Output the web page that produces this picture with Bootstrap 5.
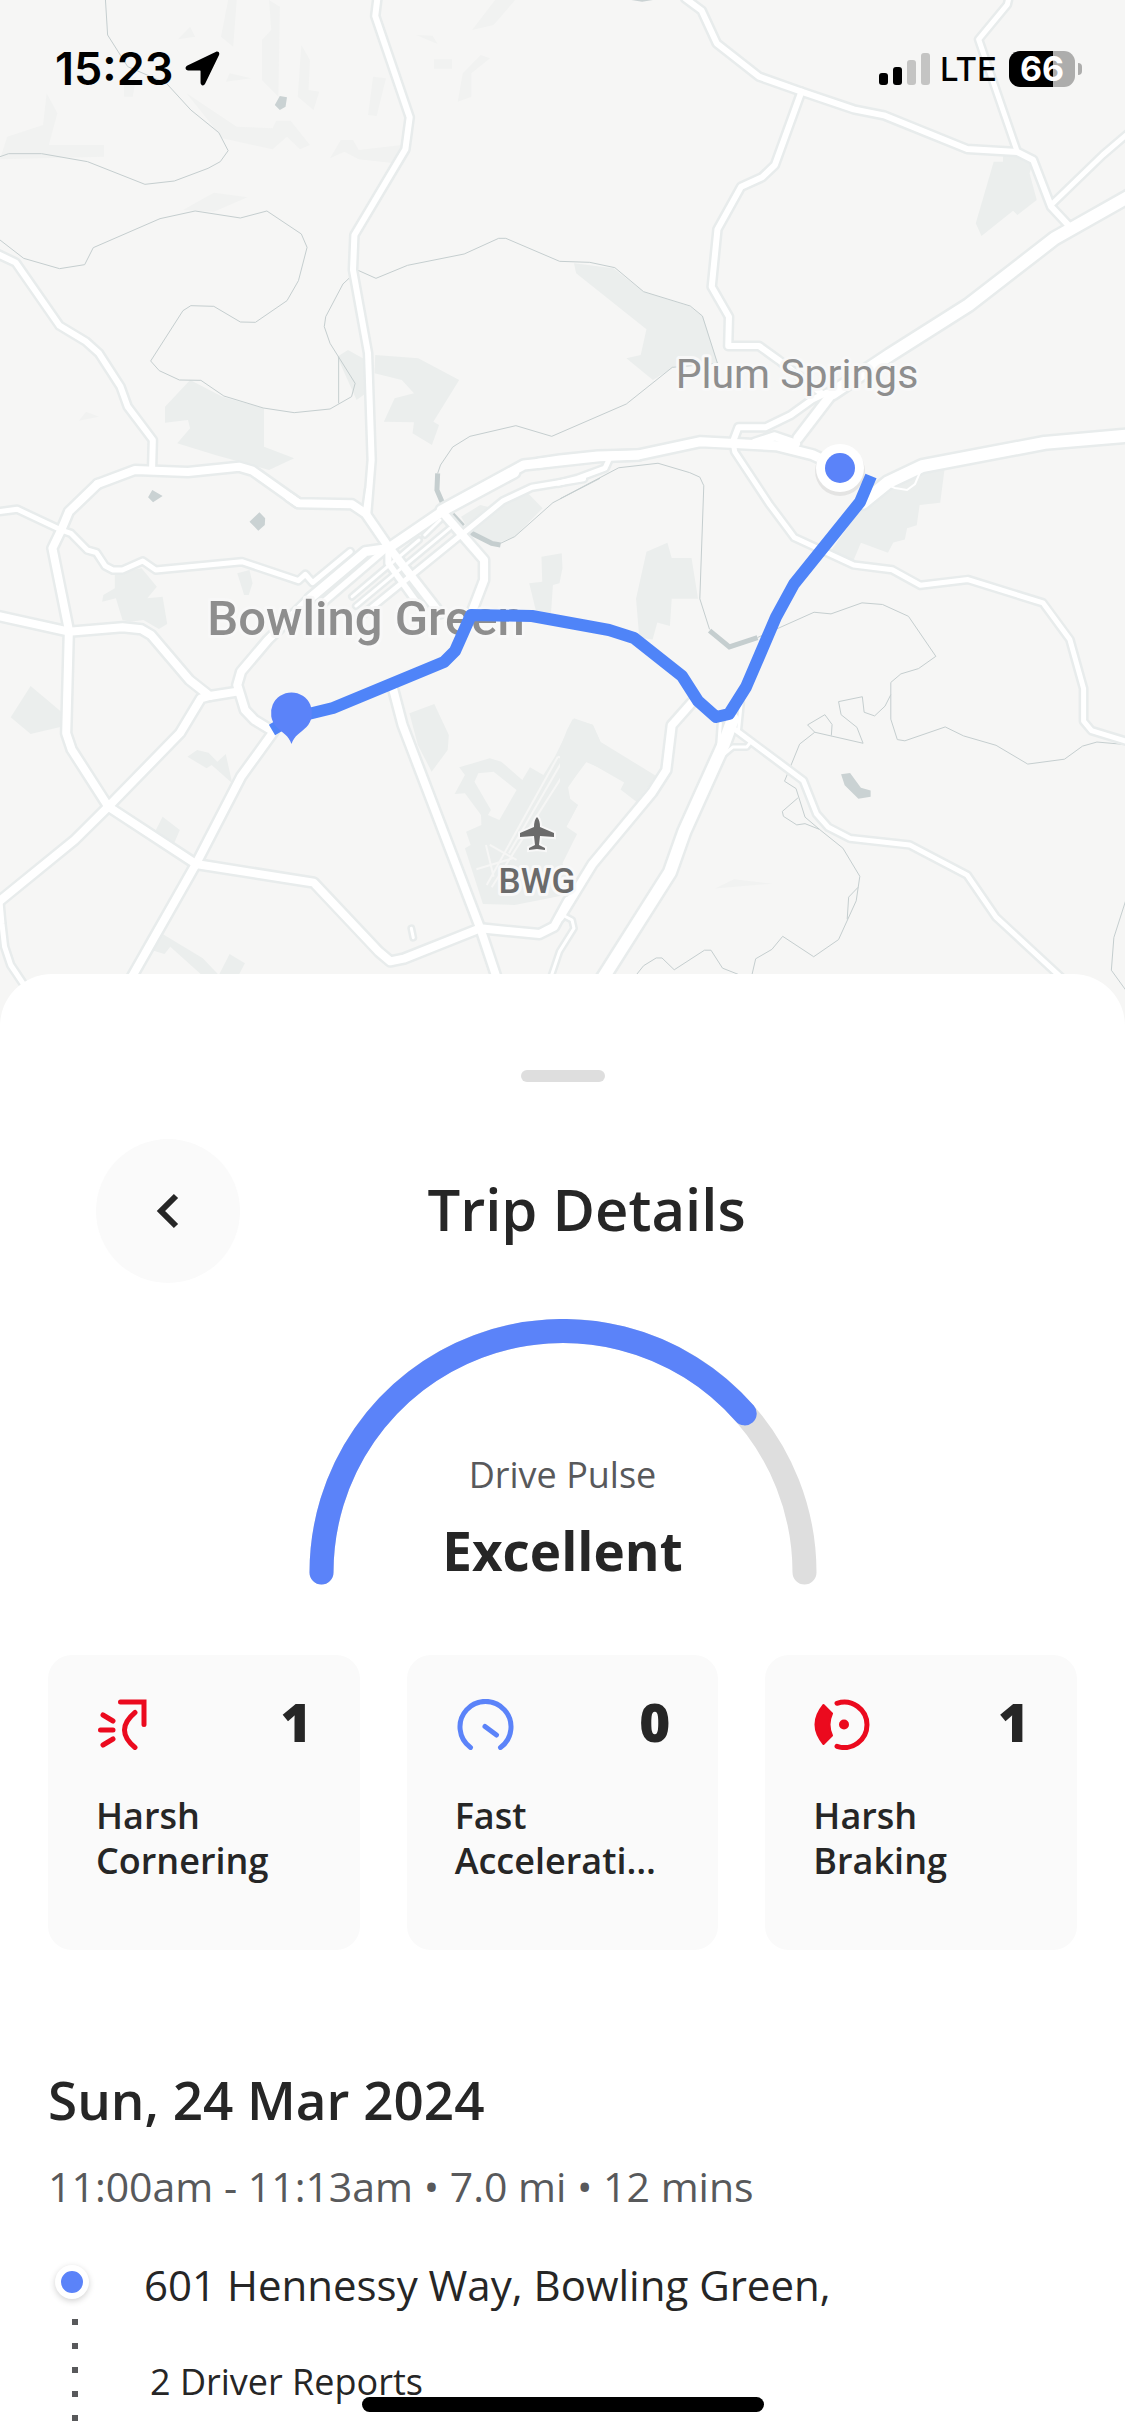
<!DOCTYPE html>
<html lang="en">
<head>
<meta charset="utf-8">
<meta name="viewport" content="width=device-width, initial-scale=1">
<title>Trip Details</title>
<link href="https://cdn.jsdelivr.net/npm/bootstrap@5.3.0/dist/css/bootstrap.min.css" rel="stylesheet">
<style>
:root{--accent:#5b83f9;--ink:#262626;--soft:#58595b;--line:#dedede;--panel:#fafafa;--alert:#eb0a1e}
body{font-family:"Open Sans","Noto Sans",sans-serif;color:var(--ink);background:#fff;overflow-x:hidden}
.map-area{height:1026px;background:#f6f6f5}
.map-area>svg{width:100%;height:100%;display:block}
/* map layers */
.roads path{fill:none;stroke-linejoin:round;stroke-linecap:round;vector-effect:non-scaling-stroke;stroke-width:calc(var(--w) + var(--edge))}
.w3{--w:3px}.w5{--w:5px}.w6{--w:6px}.w8{--w:8px}.w10{--w:9px}.w12{--w:12px}
.casing{stroke:#e8ecec;--edge:5px}
.surface{stroke:#fff;--edge:0px}
.land{fill:#ebeeed}.land-faint{fill:#f1f2f1}.water{fill:#cad2d3}
.streams path{fill:none;stroke:#c5cecf;stroke-width:1px;vector-effect:non-scaling-stroke}
.streams .wide{stroke-width:5px}
.runway path{fill:none;stroke:#f6f6f5;stroke-width:2px;vector-effect:non-scaling-stroke}
.route{fill:none;stroke:#4f84f8;stroke-width:12px;stroke-linejoin:round}
.place{font-family:Roboto,sans-serif;text-anchor:middle;paint-order:stroke;stroke:#f8f8f8;stroke-width:6px;stroke-linejoin:round;fill:#8e8e8e}
.place-town{font-size:41px}
.place-city{font-size:49px;font-weight:500}
.place-air{font-size:35px;font-weight:500;fill:#6b6b6b}
/* status bar */
.status{padding:50px 43px 0 55px;font-family:Inter,sans-serif;color:#000}
.status-row{height:37px}
.clock{font-size:45px;font-weight:600;line-height:36px}
.net{font-size:33px;font-weight:500;line-height:36px;margin:0 12px 0 9px}
.battery{width:66px;height:36px;border-radius:11px;background:linear-gradient(90deg,#000 66%,#adadac 66%);color:#fff;font-size:34px;font-weight:700;line-height:36px}
.battery-tip{width:4px;height:12px;border-radius:0 6px 6px 0;background:#adadac;margin-left:3px}
/* sheet */
.sheet{margin-top:-52px;padding:96px 48px 0;border-radius:52px 52px 0 0;background:#fff}
.grip{width:84px;height:12px;border-radius:6px;background:var(--line)}
.sheet-head{margin-top:57px;padding:0 48px}
.back-btn{width:144px;height:144px;background:var(--panel);border:0}
.sheet-title{font-size:58px;line-height:68px;padding-bottom:4px;font-weight:600;margin-right:96px}
.gauge{width:508px;margin-top:36px}
.gauge-label{font-size:36px;line-height:52px;color:var(--soft);margin-bottom:16px}
.gauge-value{font-size:53px;line-height:68px;font-weight:700}
.stats{gap:47px;margin-top:70px}
.stat{flex:1 1 0;min-width:0;background:var(--panel);border-radius:24px;padding:44px 48px 67px}
.stat-count{font-size:53px;line-height:46px;font-weight:800}
.stat-label{font-size:36px;line-height:45px;font-weight:600;margin-top:43px}
.trip-date{font-size:53px;line-height:64px;font-weight:600;margin:118px 0 26px}
.trip-meta{font-size:41px;line-height:56px;color:var(--soft);margin-bottom:43px}
.rail{width:34px;margin-left:7px;padding-top:8px}
.stop-dot{width:34px;height:34px;border:6px solid #fff;background:var(--accent);box-shadow:0 2px 6px rgba(0,0,0,.18)}
.dash{width:6px;margin:20px 0 0 6px;background:repeating-linear-gradient(#58595b 0 6px,transparent 6px 24px)}
.stops{padding:0 0 30px 55px}
.stop-name{font-size:42px;line-height:56px;margin-bottom:44px}
.stop-note{font-size:36px;line-height:50px;padding-left:6px}
.home-bar{left:50%;bottom:24px;width:402px;height:15px;margin-left:-201px;border-radius:8px;background:#000}
</style>
</head>
<body>
<header class="map-area position-relative">
<svg viewBox="0 0 1125 1026" preserveAspectRatio="xMidYMin slice" role="img" aria-label="Trip route map">
<defs>
<g id="roads" class="roads">
 <g transform="scale(.71747 .33333)">
  <path class="w6" d="M526-5L523 48 571 352 565 448 494 705 492 810 513 1060 518 1380 512 1540"/>
  <path class="w6" d="M955-5L978 32 999 130 1058 230 1117 275 1190 328 1232 346 1348 447 1418 456 1440 480 1465 620 1492 682"/>
  <path class="w6" d="M1117 275L1080 495 1062 532 1033 560 1000 688 992 860 1016 950 1015 1038 1058 1038 1085 1080 1145 1180"/>
  <path class="w5" d="M1406-5L1404 14 1364 118 1418 456"/>
  <path class="w5" d="M1575 395L1537 465 1465 615"/>
  <path class="w12" d="M1585 575L1470 715 1350 915 1240 1065 1160 1180"/>
  <path class="w10" d="M1160 1180L1112 1315"/>
  <path class="w6" d="M-5 760L22 788 83 977 120 1025 138 1060 168 1160 178 1220 213 1320 212 1405"/>
  <path class="w8" d="M136 1452L188 1410 262 1416 333 1400 352 1412 415 1508"/>
  <path class="w10" d="M615 1530L730 1395 835 1370 890 1365"/>
 </g>
 <g transform="translate(0 480) scale(.38265 .33333)">
  <path class="w8" d="M255 12L180 95 160 150 137 205 180 450 173 760 187 808 283 980 512 1152 820 1208 990 1415 1020 1444 1055 1436 1255 1345 1410 1362 1448 1340 1485 1262"/>
  <path class="w8" d="M755 50L780 70 920 73 955 100 1015 200 1150 400"/>
  <path class="w6" d="M1015 205L1015 250 1100 385"/>
  <path class="w10" d="M1345-22L1155 95 1015 205 955 215 810 355"/>
  <path class="w8" d="M810 355L700 480 630 575 620 615 640 690 665 720 715 755 630 890 512 1152 340 1500"/>
  <path class="w6" d="M1000 215L840 372"/>
  <path class="w5" d="M-5 95L45 88 160 150 185 160 228 210 252 218 275 258 295 270 320 270 373 243 407 270 632 245 780 302 798 283 817 308 915 215"/>
  <path class="w8" d="M-5 408L180 455 320 442 370 448 395 465 495 600 548 648 620 635"/>
  <path class="w8" d="M548 648L525 655 470 760 283 980 195 1080-5 1267"/>
  <path class="w5" d="M0 1265L5 1330 12 1400 28 1455 60 1510"/>
  <path class="w8" d="M1028 630L1052 735 1255 1345 1300 1500"/>
  <path class="w8" d="M1155 95L1265 240 1265 300 1235 390"/>
  <path class="w5" d="M1525-4L1390 22 1315 62 1205 165 1060 300 910 440"/>
  <path class="w3" d="M1095 180L920 350M1150 120L1110 165M1175 145L930 378"/>
  <path class="w5" d="M955 95L963 30"/>
  <path class="w3" d="M1470 1305L1495 1320 1500 1345 1462 1415 1440 1490M1075 1345L1080 1373"/>
 </g>
 <g transform="translate(560 360) scale(.36036 .40816)">
  <path class="w10" d="M-60 253L0 245 105 235 215 233 390 200 600 210 700 232 780 265"/>
  <path class="w8" d="M540 203L595 187 655 205"/>
  <path class="w6" d="M740 80L700 97 640 135 570 165 495 165 480 200"/>
  <path class="w5" d="M480 200L485 225 580 352 650 435 815 502 922 514 1000 552 1132 538 1340 595 1415 685 1453 805 1453 885 1475 908 1575 935"/>
  <path class="w12" d="M840 350L910 300 1005 260 1345 203 1580 185"/>
  <path class="w5" d="M-5 302L48 290 125 265 138 240"/>
  <path class="w5" d="M470 895L675 1030 712 1112 745 1145 805 1172 970 1188 1130 1262 1210 1365 1390 1512"/>
  <path class="w12" d="M480 880L455 940 345 1155 305 1255 115 1520"/>
  <path class="w3" d="M503 840L495 910M445 890L440 950M450 970L480 948 518 948 530 935"/>
  <path class="w8" d="M365 840L310 895 295 1005 255 1060 90 1235 0 1365"/>
 </g>
</g>
</defs>
<g transform="scale(.71747 .33333)">
 <path class="land-faint" d="M65 280L80 340 68 435 145 435 145 470 0 478 10 410 60 375zM260 280L330 380 380 385 385 362 405 362 432 435 418 448 400 410 380 448 310 415zM475 420L492 420 500 450 560 435 550 490 500 478 480 455 460 475zM318 0L330 0 325 140 308 110zM375 0L390 20 388 290 365 240 365 120 378 90zM420 135L432 180 430 270 445 275 437 330 415 290zM690 0L718 0 688 75 658 90zM670 165L683 175 657 220 657 290 638 305 645 220zM298 578L345 592 298 635 255 630zM265 80L272 110 248 118zM580 105L603 107 610 132zM605 178L630 178 630 206 605 206zM320 220L350 235 315 245zM520 230L538 235 525 348 513 345zM120 1235L138 1250 110 1262zM173 230L190 230 185 290 173 290z"/>
 <path class="land" d="M800 790L855 805 897 875 960 918 980 950 1000 1090 940 1100 910 1140 873 1075 893 1065 901 988 803 820zM523 1065L583 1075 640 1140 604 1265 612 1275 602 1335 575 1300 577 1267 535 1265 550 1195 577 1180 560 1140 522 1120zM265 1140L310 1190 368 1225 368 1340 410 1375 375 1410 300 1365 247 1330 265 1285 262 1260 230 1268 230 1220zM485 1050L510 1080 510 1180 497 1200 470 1070zM1398 465L1420 465 1440 485 1435 520 1445 600 1418 645 1412 632 1368 708 1360 670 1385 485 1398 485z"/>
 <path class="water" d="M390 288L400 292 398 320 390 330 383 315zM880 0L910 0 895 5z"/>
</g>
<g transform="translate(0 480) scale(.38265 .33333)">
 <path class="land" fill-rule="evenodd" d="M1500 715L1550 735 1575 800 1575 868 1530 845 1483 925 1490 960 1510 975 1480 1040 1508 1062 1470 1150 1500 1240 1345 1275 1262 1272 1215 1105 1230 1095 1218 1055 1258 1035 1257 1005 1215 940 1188 942 1215 885 1200 862 1280 835 1310 845 1365 900 1385 862 1420 885 1450 830zM1240 905L1250 880 1290 875 1350 930 1305 1020 1275 1005 1283 990z"/>
 <path class="land" d="M1070 700L1135 672 1173 765 1170 810 1128 875 1092 795zM80 618L160 695 160 740 80 762 28 712zM300 280L370 265 410 320 385 355 425 350 437 432 415 447 375 420 340 425 320 420 303 355 267 365 270 345 300 325zM620 280L652 270 660 310 650 345 638 345zM1415 230L1468 220 1470 265 1462 310 1445 315 1440 400 1400 390 1383 310 1417 305zM515 810L545 818 568 845 590 822 607 910 553 855 540 865 490 830zM425 1010L470 1050 455 1090 405 1055zM425 1362L530 1435 570 1483 525 1483 445 1400 430 1422 395 1410zM600 1422L640 1450 625 1483 573 1483zM1205 110L1255 75 1290 85 1380 40 1418 85 1345 170 1300 190 1225 150z"/>
 <path class="water" d="M398 30L425 48 400 67 387 52zM678 97L693 115 692 135 675 152 652 125z"/>
 <g class="runway"><path d="M1458 830L1272 1215M1495 842L1285 1222M1458 830L1495 842M1470 842L1330 1120M1245 1168L1340 1135M1280 1095L1350 1140M1270 1095L1290 1190"/></g>
</g>
<g transform="translate(560 360) scale(.36036 .40816)">
 <path class="land" d="M1005 265L1067 268 1055 350 998 355 990 405 963 412 957 440 925 447 910 472 835 448 815 490 750 470 850 345zM240 470L298 448 310 485 365 485 383 585 310 585 305 652 270 643 257 685 220 680 211 585zM20 905L35 880 90 893 112 935 268 1020 212 1082 168 1052 178 1035 75 983 22 1045 28 1075 50 1090 17 1145 45 1162 0 1235 0 950z"/>
 <path class="land-faint" d="M430 1295L483 1272 588 1283z"/>
 <path class="water" d="M780 1015L805 1012 835 1048 862 1055 862 1070 828 1075 790 1042z"/>
</g>
<g class="streams">
 <g transform="scale(.71747 .33333)">
  <path d="M147 0L150 105 178 200 232 250 266 330 305 398 318 452 307 485 290 505 243 543 202 553 122 485 58 461 12 461 0 470M0 720L33 775 83 806 118 794 130 743 223 656 272 633 335 654 372 633 420 702 428 742 416 842 400 902 356 967 335 966 298 919 266 917 255 932 210 1083 222 1112 250 1140 280 1141 312 1188 367 1224 410 1238 460 1227 490 1190 495 1150 460 1030 452 980 454 950 478 852 490 828M498 810L524 835 568 796 647 762 695 715 705 715 780 784 822 787 857 803 897 875 962 918 979 948 1000 1090 937 1102 873 1212 769 1309 719 1277 655 1309 631 1341 614 1395 610 1420M472 1070L472 1210"/>
  <path class="wide" d="M610 1420L609 1470 618 1515"/>
 </g>
 <g transform="translate(0 480) scale(.38265 .33333)">
  <path d="M1308 190L1345 170 1445 68 1568-5"/>
  <path class="wide" d="M1182 103L1210 138M1230 158L1285 190 1308 195"/>
 </g>
 <g transform="translate(560 360) scale(.36036 .40816)">
  <path d="M0 340L163 264 272 253 360 276 388 287 399 308 388 585 415 660M548 680L705 618 752 622 838 595 895 599 967 628 1043 726 995 756 946 769 918 790 918 880 936 930 957 933 1069 899 1120 921 1210 944 1298 990 1400 978 1450 946 1490 936 1568 942M918 820L902 848 873 872 844 863 839 825 773 837 780 869 824 900 841 939 707 912 665 941 623 1032 655 1050 680 1120 720 1150 785 1196 832 1265 822 1325 773 1420 704 1462 618 1412 588 1444 543 1467 533 1505M753 920L755 893 735 869 687 894 707 912M660 1073L617 1106 620 1118 657 1139 680 1136 720 1150M827 1292L801 1316 797 1370M213 1505L232 1484 267 1465 283 1465 317 1494 401 1446 419 1446 451 1490 494 1505M1575 1310L1537 1415 1530 1495 1575 1550"/>
  <path class="wide" d="M415 663L470 703 548 680"/>
 </g>
</g>
<use href="#roads" class="casing"/>
<use href="#roads" class="surface"/>
<path fill="none" stroke="#fff" stroke-width="2" d="M880 482l15 6 12 2 8-6 6-14"/>
<text class="place place-town" x="797" y="388">Plum Springs</text>
<text class="place place-city" x="366" y="635">Bowling Green</text>
<text class="place place-air" x="537" y="893">BWG</text>
<path fill="#6b6b6b" stroke="#f8f8f8" stroke-width="4" paint-order="stroke" d="M537 817q3 3 3 10l14 6v4l-14-1-1 9 6 3v2l-8-1-8 1v-2l6-3-1-9-14 1v-4l14-6q0-7 3-10z"/>
<path class="route" d="M272 730L292 718 333 708 444 662 455 651 471 615 532 616 609 630 634 638 682 676 698 701 716 717 729 714 746 687 776 617 794 584 860 502 871 476"/>
<path fill="#5b83f9" d="M291.500 692.500a20.500 20.500 0 0 1 15 34.500c-6 6-12 8-15 17-3-9-9-11-15-17a20.500 20.500 0 0 1 15-34.500z"/>
<circle cx="840" cy="471" r="25" fill="#000" opacity=".07"/>
<circle cx="840" cy="468" r="24" fill="#fff"/>
<circle cx="840" cy="468" r="15" fill="#5b83f9"/>
</svg>
<div class="status position-absolute top-0 start-0 w-100">
 <div class="status-row d-flex align-items-center justify-content-between">
  <div class="d-flex align-items-center gap-2">
   <span class="clock me-1">15:23</span>
   <svg width="35" height="35" viewBox="0 0 36 36" aria-hidden="true"><path d="M32 .8L2.500 15c-3 1.500-2.300 5 1 5H15c.8 0 1 .3 1 1v11.500c0 3.300 3.400 4 4.800 1L35 4c1-2.200-.9-4-3-3.200z"/></svg>
  </div>
  <div class="d-flex align-items-center">
   <svg width="52" height="32" viewBox="0 0 52 32" aria-hidden="true"><rect y="20" width="9" height="12" rx="3"/><rect x="14" y="14" width="9" height="18" rx="3"/><g fill="#c4c4c3"><rect x="28" y="7" width="9" height="25" rx="3"/><rect x="42" width="9" height="32" rx="3"/></g></svg>
   <span class="net">LTE</span>
   <span class="battery text-center">66</span><span class="battery-tip"></span>
  </div>
 </div>
</div>
</header>
<main class="sheet position-relative">
 <div class="grip mx-auto"></div>
 <div class="sheet-head d-flex align-items-center">
  <button type="button" class="back-btn btn rounded-circle d-flex align-items-center justify-content-center" aria-label="Back"><svg width="24" height="36" viewBox="0 0 24 36" fill="none" stroke="#262626" stroke-width="6"><path d="M20 3L5 18l15 15"/></svg></button>
  <h1 class="sheet-title flex-grow-1 text-center mb-0">Trip Details</h1>
 </div>
 <section class="gauge position-relative mx-auto">
  <svg class="d-block" width="508" height="266" viewBox="0 0 508 266" fill="none" stroke-width="24" stroke-linecap="round" aria-hidden="true"><path stroke="#dedede" d="M12.500 253.500a241.500 241.500 0 0 1 483 0"/><path stroke="#5b83f9" d="M12.500 253.500A241.500 241.500 0 0 1 435.700 94.400"/></svg>
  <div class="position-absolute bottom-0 start-0 w-100 text-center">
   <div class="gauge-label">Drive Pulse</div>
   <div class="gauge-value">Excellent</div>
  </div>
 </section>
 <section class="stats d-flex">
  <div class="stat">
   <div class="d-flex justify-content-between align-items-start">
    <svg width="52" height="51" viewBox="-2 0 52 51" fill="none" stroke="#eb0a1e" stroke-width="5" stroke-linecap="round" aria-hidden="true"><path d="M22.500 3H46v22.500M37 13.500Q16 31 37 48.500M5 16l10 6M2.500 31H15M5 46l10-6"/></svg>
    <span class="stat-count">1</span>
   </div>
   <div class="stat-label"><div>Harsh</div><div>Cornering</div></div>
  </div>
  <div class="stat">
   <div class="d-flex justify-content-between align-items-start">
    <svg width="59" height="51" viewBox="-2 0 59 51" fill="none" stroke="#5b83f9" stroke-width="5" stroke-linecap="round" aria-hidden="true"><path d="M13.500 48.500a25.500 25.500 0 1 1 30 0M28 27.500l11.500 8.500"/></svg>
    <span class="stat-count">0</span>
   </div>
   <div class="stat-label"><div>Fast</div><div>Accelerati…</div></div>
  </div>
  <div class="stat">
   <div class="d-flex justify-content-between align-items-start">
    <svg width="59" height="51" viewBox="-2 0 59 51" fill="none" stroke="#eb0a1e" stroke-width="5" stroke-linecap="round" aria-hidden="true"><path d="M22 4.300a22.700 22.700 0 1 1 0 43"/><circle cx="29" cy="25.500" r="5" fill="#eb0a1e" stroke="none"/><path fill="#eb0a1e" stroke-width="2" stroke-linejoin="round" d="M8.500 6L17 14.500Q12 25.500 17 36.500L8.500 45Q-7.500 25.500 8.500 6z"/></svg>
    <span class="stat-count">1</span>
   </div>
   <div class="stat-label"><div>Harsh</div><div>Braking</div></div>
  </div>
 </section>
 <h2 class="trip-date">Sun, 24 Mar 2024</h2>
 <p class="trip-meta">11:00am - 11:13am • 7.0 mi • 12 mins</p>
 <section class="d-flex">
  <div class="rail d-flex flex-column align-items-center">
   <span class="stop-dot rounded-circle flex-shrink-0"></span>
   <span class="dash flex-grow-1"></span>
  </div>
  <div class="stops">
   <div class="stop-name">601 Hennessy Way, Bowling Green,</div>
   <div class="stop-note">2 Driver Reports</div>
  </div>
 </section>
</main>
<div class="home-bar position-fixed"></div>
<script src="https://cdn.jsdelivr.net/npm/bootstrap@5.3.0/dist/js/bootstrap.bundle.min.js"></script>
</body>
</html>
